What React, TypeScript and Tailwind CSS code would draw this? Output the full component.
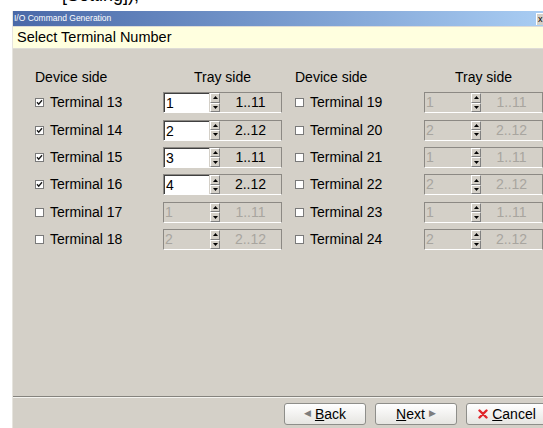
import React from 'react'

type Slot = { term: number; value: string; range: string; on: boolean }

// terminal pairs shown side by side: device terminal -> tray terminal
const rows: [Slot, Slot][] = [
  [{ term: 13, value: '1', range: '1..11', on: true }, { term: 19, value: '1', range: '1..11', on: false }],
  [{ term: 14, value: '2', range: '2..12', on: true }, { term: 20, value: '2', range: '2..12', on: false }],
  [{ term: 15, value: '3', range: '1..11', on: true }, { term: 21, value: '1', range: '1..11', on: false }],
  [{ term: 16, value: '4', range: '2..12', on: true }, { term: 22, value: '2', range: '2..12', on: false }],
  [{ term: 17, value: '1', range: '1..11', on: false }, { term: 23, value: '1', range: '1..11', on: false }],
  [{ term: 18, value: '2', range: '2..12', on: false }, { term: 24, value: '2', range: '2..12', on: false }],
]

const CheckBox = ({ checked }: { checked: boolean }) => (
  <span className="w-[9px] h-[9px] border border-[#7a7a7a] bg-white flex items-center justify-center shrink-0">
    {checked && (
      <svg width="7" height="7" viewBox="0 0 7 7">
        <path d="M1 3.3 L2.7 5.2 L6 1.3" stroke="#1a1a1a" strokeWidth="1.4" fill="none" />
      </svg>
    )}
  </span>
)

const SpinHalf = ({ up }: { up: boolean }) => (
  <div className="flex-1 flex items-center justify-center bg-[#d4d0c8] border border-t-white border-l-white border-b-[#808080] border-r-[#808080]">
    <svg width="5" height="3" viewBox="0 0 5 3">
      <path d={up ? 'M2.5 0 L5 3 L0 3 Z' : 'M0 0 L5 0 L2.5 3 Z'} fill="#000" />
    </svg>
  </div>
)

const SpinBox = ({ slot }: { slot: Slot }) => (
  <div className="h-[21px] w-[119px] flex border border-[#8c8984] border-b-white">
    <div
      className={`w-[45px] h-full pl-[1px] text-[14px] leading-[19px] ${
        slot.on ? 'bg-white text-black border-t border-l border-[#404040]' : 'bg-[#d4d0c8] text-[#a8a59f]'
      }`}
    >
      {slot.value}
    </div>
    <div className="w-[10px] ml-[1px] flex flex-col">
      <SpinHalf up />
      <SpinHalf up={false} />
    </div>
    <div className={`flex-1 text-center text-[14px] leading-[19px] ${slot.on ? 'text-black' : 'text-[#a8a59f]'}`}>
      {slot.range}
    </div>
  </div>
)

const Terminal = ({ slot }: { slot: Slot }) => (
  <div className="flex items-center gap-[6px] text-[14px] text-black">
    <CheckBox checked={slot.on} />
    <span>Terminal {slot.term}</span>
  </div>
)

const Button = ({ children }: { children: React.ReactNode }) => (
  <button className="w-[82px] h-[22px] shrink-0 rounded-[3px] border border-[#8e8e8a] bg-gradient-to-b from-white to-[#e6e5e1] text-[14px] text-black flex items-center justify-center gap-[4px]">
    {children}
  </button>
)

export default function App() {
  return (
    <div className="w-[543px] h-[428px] bg-white flex flex-col overflow-hidden font-['Liberation_Sans',Arial,sans-serif]">
      <div className="h-[11px] relative overflow-hidden shrink-0">
        <span className="absolute left-[62px] -top-[18px] text-[18px] text-black">[Setting]);</span>
      </div>

      <div className="flex-1 min-h-0 ml-[12px] flex flex-col border-l border-[#e6e4de]">
        <div className="h-[15px] shrink-0 flex items-center justify-between bg-gradient-to-r from-[#4a69a8] to-[#a9cdf3]">
          <span className="pl-[1px] text-[8.5px] text-white leading-none">I/O Command Generation</span>
          <span className="w-[7px] h-[12px] bg-[#d4d0c8] border-l border-t border-white text-[9px] leading-[11px] text-black overflow-hidden pl-[1px]">x</span>
        </div>

        <div className="h-[23px] shrink-0 border-t border-b border-[#dedcd6] bg-[#ffffdf] pl-[4px] text-[14.5px] leading-[20px] text-black">
          Select Terminal Number
        </div>

        <div className="flex-1 min-h-0 bg-[#d4d0c8] pt-[18px] pl-[22px] overflow-hidden">
          <div className="grid grid-cols-[128px_119px_142px_119px] text-[14px] text-black">
            <div className="h-[22px] leading-[20px]">Device side</div>
            <div className="h-[22px] leading-[20px] text-center">Tray side</div>
            <div className="h-[22px] leading-[20px] pl-[13px]">Device side</div>
            <div className="h-[22px] leading-[20px] text-center">Tray side</div>
            {rows.map(([l, r]) => (
              <React.Fragment key={l.term}>
                <div className="h-[27.4px] flex items-center">
                  <Terminal slot={l} />
                </div>
                <div className="h-[27.4px] flex items-center">
                  <SpinBox slot={l} />
                </div>
                <div className="h-[27.4px] flex items-center pl-[13px]">
                  <Terminal slot={r} />
                </div>
                <div className="h-[27.4px] flex items-center">
                  <SpinBox slot={r} />
                </div>
              </React.Fragment>
            ))}
          </div>
        </div>

        <div className="h-[2px] shrink-0 bg-[#d4d0c8] border-t border-[#85837e] border-b-0">
          <div className="h-px bg-[#f4f3ef]" />
        </div>

        <div className="h-[30px] shrink-0 bg-[#d4d0c8] flex items-start pt-[5px] pl-[271px] gap-[9px]">
          <Button>
            <span className="text-[9px] text-[#7d7d7d]">◀</span>
            <span><u>B</u>ack</span>
          </Button>
          <Button>
            <span><u>N</u>ext</span>
            <span className="text-[9px] text-[#7d7d7d]">▶</span>
          </Button>
          <Button>
            <svg width="10" height="10" viewBox="0 0 10 10">
              <path d="M1.5 1.5 L8.5 8.5 M8.5 1.5 L1.5 8.5" stroke="#e0262b" strokeWidth="2.4" strokeLinecap="round" />
            </svg>
            <span><u>C</u>ancel</span>
          </Button>
        </div>
      </div>
    </div>
  )
}
